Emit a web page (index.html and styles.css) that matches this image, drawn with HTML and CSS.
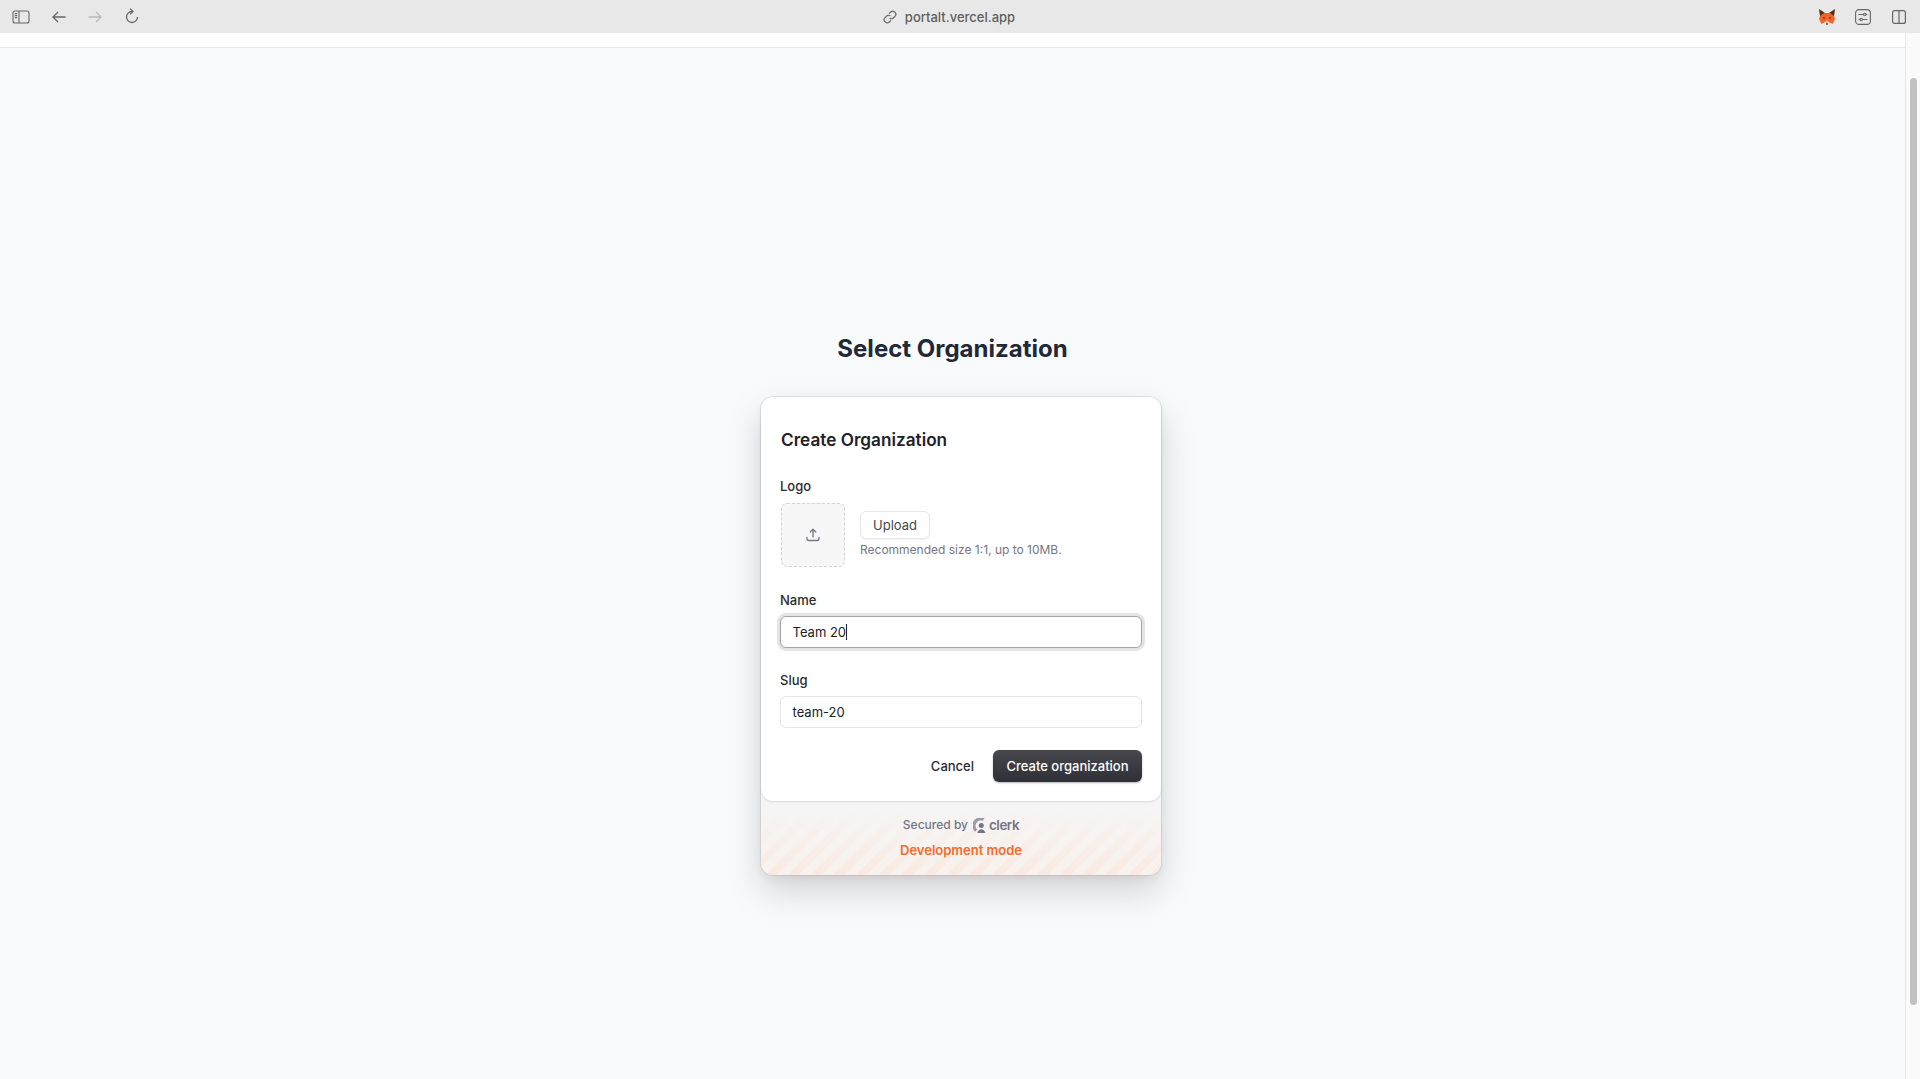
FILE: index.html
```html
<!DOCTYPE html>
<html lang="en">
<head>
    <meta charset="UTF-8">
    <meta name="viewport" content="width=device-width, initial-scale=1.0">
    <title>Select Organization</title>
    <link rel="stylesheet" href="styles.css">
</head>
<body>
    <header class="toolbar">
        <div class="tools-left">
            <svg class="tool sidebar-icon" viewBox="0 0 18 14" fill="none" stroke="#666" stroke-width="1.1"><rect x="1" y="1" width="16" height="12" rx="2"/><path d="M7 1v12M2.800 3.600h2.400M2.800 5.600h2.400M2.800 7.600h2.400"/></svg>
            <svg class="tool arrow-icon" viewBox="0 0 14 12" fill="none" stroke="#666" stroke-width="1.3"><path d="M13.500 6H1M6 1 1 6l5 5"/></svg>
            <svg class="tool arrow-icon" viewBox="0 0 14 12" fill="none" stroke="#b9b9b9" stroke-width="1.3"><path d="M.5 6H13M8 1l5 5-5 5"/></svg>
            <svg class="tool reload-icon" viewBox="0 0 14 16" fill="none" stroke="#666" stroke-width="1.300"><path d="M7 3.500a5.500 5.500 0 1 0 5.500 5.500"/><path d="M5 .6 8 3.500 5 6.400"/></svg>
        </div>
        <div class="address">
            <svg class="link-icon" viewBox="0 0 14 14" fill="none" stroke="#666" stroke-width="1.2"><path d="M6 3.600 7.900 1.800a2.500 2.500 0 0 1 3.600 0l.7.7a2.500 2.500 0 0 1 0 3.600L10.300 8a2.500 2.500 0 0 1-3.600 0"/><path d="M8 10.400 6.100 12.200a2.500 2.500 0 0 1-3.600 0l-.7-.7a2.500 2.500 0 0 1 0-3.600L3.700 6a2.500 2.500 0 0 1 3.600 0"/></svg>
            <span>portalt.vercel.app</span>
        </div>
        <div class="tools-right">
            <svg class="fox-icon" viewBox="0 0 16 16">
                <path fill="#5b2a12" d="M0 0 6 4H10L16 0 15 7 8 9 1 7Z"/>
                <path fill="#f0642a" d="M1 7 5 4H11L15 7 16 10 13.500 15 10 13H6L2.500 15 0 10Z"/>
                <path fill="#f9b79a" d="M6 13 8 11 10 13 8 14.500Z"/>
                <path fill="#3b1d0d" d="M3.800 8.200 6 8.600 5 10ZM12.200 8.200 10 8.600 11 10ZM7.400 14H8.600V16H7.400Z"/>
            </svg>
            <svg class="filter-icon" viewBox="0 0 16 16" fill="none" stroke="#666" stroke-width="1.1"><rect x=".6" y=".6" width="14.800" height="14.800" rx="3.500"/><path d="M3.500 5.500h5M11 5.500h1.500M3.500 10.500h1.500M7.500 10.500h5"/><circle cx="9.700" cy="5.500" r="1.200"/><circle cx="6.200" cy="10.500" r="1.200"/></svg>
            <svg class="split-icon" viewBox="0 0 14 14" fill="none" stroke="#666" stroke-width="1.2"><rect x=".6" y=".6" width="12.800" height="12.800" rx="2"/><path d="M7 .6v12.800"/></svg>
        </div>
    </header>

    <div class="viewport">
        <div class="page">
            <div class="topstrip"></div>
            <main class="content">
                <h1>Select Organization</h1>
            </main>
        </div>
        <div class="scrollbar">
            <div class="thumb"></div>
        </div>
    </div>

    <section class="modal">
        <div class="panel">
            <h2>Create Organization</h2>

            <div class="field">
                <label>Logo</label>
                <div class="logo-row">
                    <div class="dropzone">
                        <svg viewBox="0 0 16 16" fill="none" stroke="#747686" stroke-width="1.3" stroke-linecap="round" stroke-linejoin="round"><path d="M8 10V2.500M5.200 5 8 2.200 10.800 5M2 10.500v1a2 2 0 0 0 2 2h8a2 2 0 0 0 2-2v-1"/></svg>
                    </div>
                    <div class="upload-side">
                        <button class="upload">Upload</button>
                        <p class="hint">Recommended size 1:1, up to 10MB.</p>
                    </div>
                </div>
            </div>

            <div class="field name-field">
                <label for="name">Name</label>
                <div class="input focused" id="name">Team 20<span class="caret"></span></div>
            </div>

            <div class="field">
                <label for="slug">Slug</label>
                <div class="input" id="slug">team-20</div>
            </div>

            <div class="actions">
                <button class="cancel">Cancel</button>
                <button class="create">Create organization</button>
            </div>
        </div>
        <footer class="panel-foot">
            <div class="secured">
                <span>Secured by</span>
                <span class="clerk">
                    <svg viewBox="1 1 12 12"><path fill="#9a9ba6" d="M10.300 1.100A6.700 6.700 0 0 0 2.600 11.900L4.300 10.200A4.300 4.300 0 0 1 8.700 3.100Z"/><circle cx="7.600" cy="6.900" r="2" fill="#747686"/><path fill="#747686" d="M4.300 12.400A5.800 5.800 0 0 0 11 12.400L9.400 10.600A3.400 3.400 0 0 0 5.900 10.600Z"/></svg>
                    clerk
                </span>
            </div>
            <div class="devmode">Development mode</div>
        </footer>
    </section>
</body>
</html>
```

FILE: styles.css
```css
* {
    margin: 0;
    padding: 0;
    box-sizing: border-box;
    font-family: Inter, "Liberation Sans", sans-serif;
}

body {
    height: 1079px;
    overflow: hidden;
    display: flex;
    flex-direction: column;
    background-color: #f9fafb;
}

/* browser chrome */
.toolbar {
    height: 33px;
    flex-shrink: 0;
    display: grid;
    grid-template-columns: 1fr auto 1fr;
    align-items: center;
    background-color: #e8e8e8;
}

.tools-left {
    display: flex;
    align-items: center;
    padding-left: 12px;
}

.tool {
    display: block;
}

.sidebar-icon {
    width: 18px;
    height: 14px;
    margin-right: 22px;
}

.arrow-icon {
    width: 14px;
    height: 12px;
    margin-right: 22px;
}

.reload-icon {
    width: 14px;
    height: 16px;
    margin: -2px 0 0 1px;
}

.address {
    display: flex;
    align-items: center;
    gap: 8px;
    font-size: 13px;
    font-weight: 500;
    color: #5f5f5f;
    margin-right: 22px;
}

.link-icon {
    width: 14px;
    height: 14px;
}

.tools-right {
    display: flex;
    align-items: center;
    justify-content: flex-end;
}

.fox-icon {
    width: 16px;
    height: 16px;
    margin-right: 20px;
}

.filter-icon {
    width: 16px;
    height: 16px;
    margin-right: 21px;
}

.split-icon {
    width: 14px;
    height: 14px;
    margin-right: 14px;
}

/* page */
.viewport {
    flex: 1;
    display: flex;
    min-height: 0;
}

.page {
    flex: 1;
    display: flex;
    flex-direction: column;
}

.topstrip {
    height: 15px;
    background-color: #fff;
    border-bottom: 1px solid #e5e7eb;
}

.content {
    display: flex;
    justify-content: center;
    padding-top: 285px;
}

.content h1 {
    font-size: 24px;
    line-height: 32px;
    font-weight: 700;
    color: #1f2937;
}

.scrollbar {
    width: 15px;
    padding: 45px 3px 0 4px;
    background-color: #fafafa;
    border-left: 1px solid #e6e6e6;
}

.thumb {
    height: 927px;
    border-radius: 4px;
    background-color: #c1c1c1;
}

/* clerk card, sits over the page */
.modal {
    position: absolute;
    left: 761px;
    top: 397px;
    width: 400px;
    height: 478px;
    display: flex;
    flex-direction: column;
    border-radius: 12px;
    background-color: #f6f5f5;
    box-shadow: 0 0 0 1px rgba(0, 0, 0, 0.07), 0 16px 36px rgba(0, 0, 0, 0.16), 0 4px 10px rgba(0, 0, 0, 0.05);
}

.panel {
    height: 404px;
    padding: 32px 19px 0;
    background-color: #fff;
    border-radius: 12px;
    box-shadow: 0 1px 2px rgba(0, 0, 0, 0.12);
    position: relative;
}

.panel h2 {
    font-size: 17.2px;
    line-height: 22px;
    font-weight: 600;
    color: #212126;
    margin: 0 0 27px 1px;
}

.field {
    margin-bottom: 25px;
}

.name-field {
    margin-bottom: 24px;
}

.field label {
    display: block;
    font-size: 13px;
    line-height: 16px;
    font-weight: 500;
    color: #2b2b31;
    margin-bottom: 8px;
}

.logo-row {
    display: flex;
    align-items: center;
    gap: 15px;
    margin-top: 9px;
}

.dropzone {
    width: 64px;
    height: 64px;
    margin-left: 1px;
    display: flex;
    align-items: center;
    justify-content: center;
    background-color: #f7f7f8;
    border: 1px dashed #d3d3d6;
    border-radius: 6px;
}

.dropzone svg {
    width: 16px;
    height: 16px;
}

.upload-side {
    display: flex;
    flex-direction: column;
    align-items: flex-start;
    margin-bottom: 2px;
}

.upload {
    width: 70px;
    height: 28px;
    font-size: 13px;
    font-weight: 400;
    color: #46464d;
    background-color: #fff;
    border: 1px solid #e6e6e8;
    border-radius: 6px;
    box-shadow: 0 1px 1px rgba(0, 0, 0, 0.04);
}

.hint {
    font-size: 12px;
    line-height: 16px;
    margin-top: 3px;
    color: #747686;
}

.input {
    height: 32px;
    display: flex;
    align-items: center;
    padding: 0 11.5px;
    font-size: 13px;
    color: #212126;
    background-color: #fff;
    border: 1px solid #e5e5e7;
    border-radius: 6px;
}

.input.focused {
    border-color: #a3a3a6;
    box-shadow: 0 0 0 3px #e4e4e5;
}

.caret {
    width: 1px;
    height: 16px;
    background-color: #212126;
}

.actions {
    display: flex;
    justify-content: flex-end;
    align-items: center;
    gap: 19px;
    margin-top: -3px;
}

.actions button {
    font-size: 13px;
    font-weight: 500;
    border: none;
    background: none;
}

.cancel {
    color: #2b2b31;
}

.actions .create {
    width: 149px;
    height: 32px;
    color: #fff;
    border-radius: 6px;
    background: linear-gradient(#47474d, #2f3037);
    box-shadow: 0 1px 2px rgba(0, 0, 0, 0.3);
}

.panel-foot {
    flex: 1;
    display: flex;
    flex-direction: column;
    align-items: center;
    padding-top: 16px;
    border-radius: 0 0 12px 12px;
    background:
        linear-gradient(#f6f5f5 10%, rgba(246, 245, 245, 0.1) 100%),
        repeating-linear-gradient(-45deg, #f9e9e0 0 8px, #f9f1ec 8px 16px);
}

.secured {
    display: flex;
    align-items: center;
    gap: 5px;
    font-size: 12px;
    line-height: 16px;
    font-weight: 500;
    color: #747686;
}

.clerk {
    display: flex;
    align-items: center;
    gap: 1px;
    font-size: 13.5px;
    font-weight: 600;
    letter-spacing: -0.5px;
}

.clerk svg {
    width: 15px;
    height: 15px;
}

.devmode {
    margin-top: 8px;
    font-size: 13px;
    line-height: 18px;
    font-weight: 600;
    color: #f36b2d;
}
```
